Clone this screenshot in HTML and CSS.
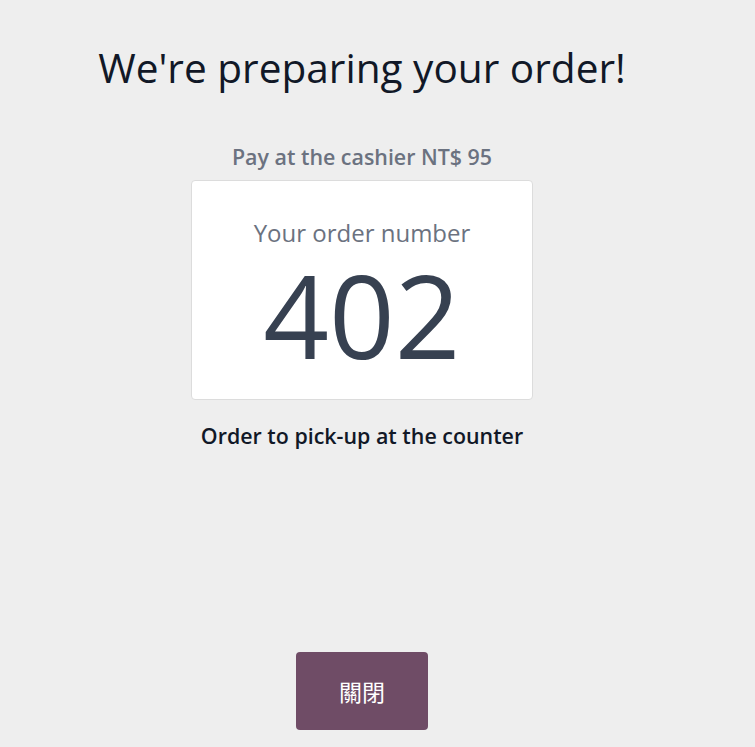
FILE: index.html
```html
<!DOCTYPE html>
<html lang="en">
<head>
<meta charset="utf-8">
<title>Order</title>
<link rel="stylesheet" href="styles.css">
</head>
<body>
<div class="page">
  <h1 class="title">We're preparing your order!</h1>
  <p class="pay">Pay at the cashier NT$ 95</p>
  <div class="card">
    <div class="card-label">Your order number</div>
    <div class="card-number">402</div>
  </div>
  <p class="pickup">Order to pick-up at the counter</p>
  <div class="spacer"></div>
  <button class="close-btn" type="button">關閉</button>
</div>
</body>
</html>
```
FILE: styles.css
```css
html, body {
  margin: 0;
  padding: 0;
  background: #eeeeee;
  height: 100%;
}
body {
  font-family: "Open Sans", "Noto Sans CJK TC", sans-serif;
}
.page {
  width: 724px;
  height: 747px;
  display: flex;
  flex-direction: column;
  align-items: center;
  box-sizing: border-box;
  padding-top: 44px;
}
.title {
  margin: 0;
  font-size: 40.6px;
  font-weight: 500;
  line-height: 48px;
  color: #111827;
}
.pay {
  margin: 51px 0 0;
  font-size: 21.4px;
  font-weight: 600;
  line-height: 28px;
  color: #6b7280;
}
.card {
  margin-top: 9px;
  width: 342px;
  height: 220px;
  box-sizing: border-box;
  background: #ffffff;
  border: 1px solid #dcdcdc;
  border-radius: 4px;
  display: flex;
  flex-direction: column;
  align-items: center;
  padding-top: 36px;
}
.card-label {
  font-size: 24px;
  line-height: 32px;
  color: #6b7280;
}
.card-number {
  font-size: 115px;
  line-height: 1;
  color: #374151;
  margin-top: 8px;
}
.pickup {
  margin: 22px 0 0;
  font-size: 21.4px;
  font-weight: 600;
  line-height: 28px;
  color: #111827;
}
.spacer {
  flex: 1;
}
.close-btn {
  width: 132px;
  height: 78px;
  margin-bottom: 17px;
  border: none;
  border-radius: 4px;
  background: #6f4c66;
  color: #ffffff;
  font-family: "Noto Sans CJK TC", sans-serif;
  font-size: 23px;
}
```
